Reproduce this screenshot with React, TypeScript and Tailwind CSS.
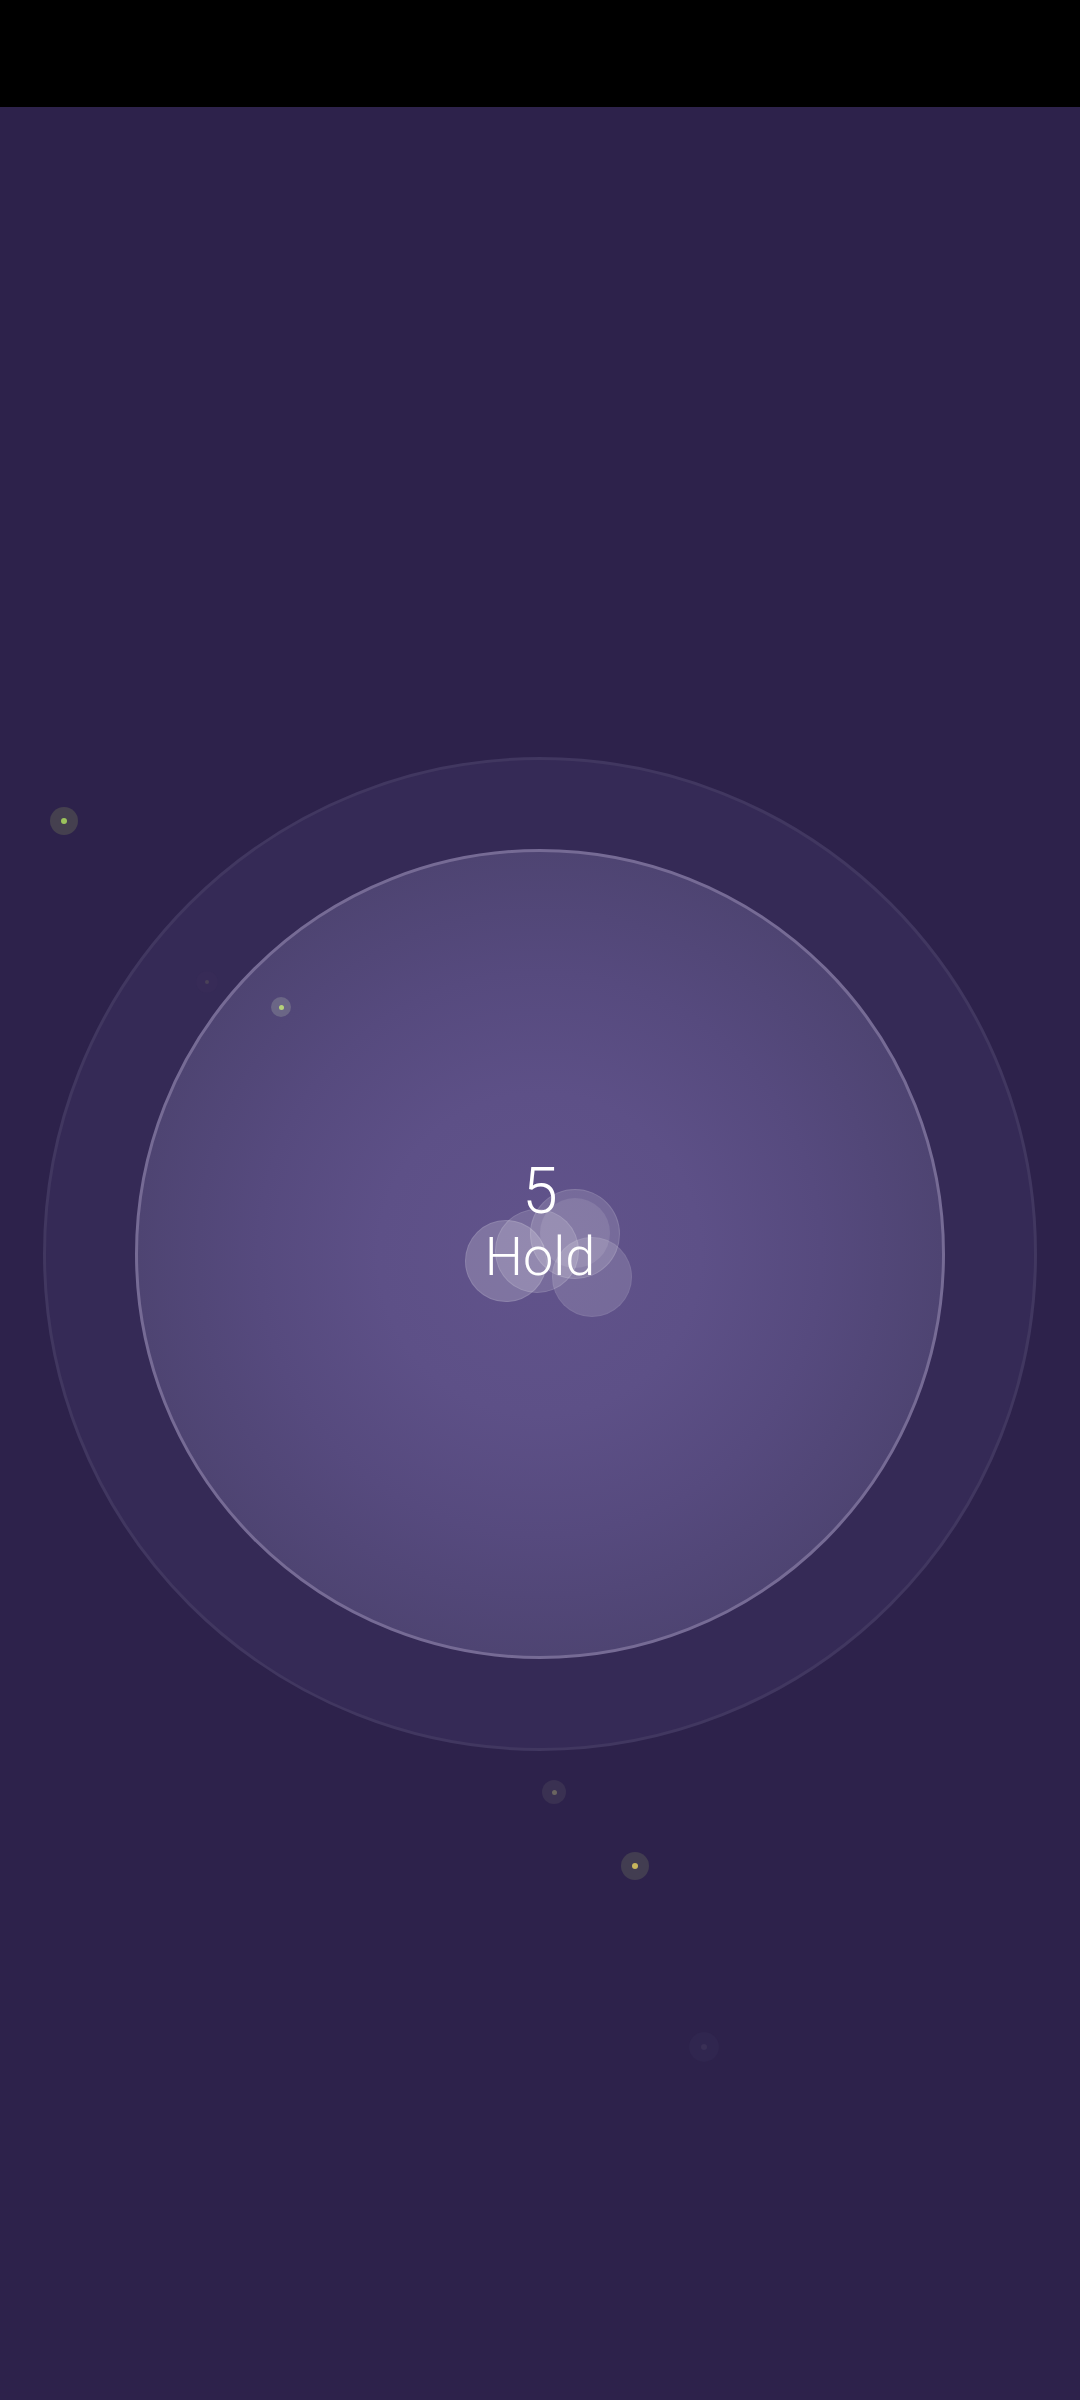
import React from "react";

type Particle = { x: number; y: number; r: number; halo: string; core: string; coreR: number };

const particles: Particle[] = [
  { x: 64, y: 821, r: 14, halo: "bg-[#45404f]", core: "bg-[#9cc35c]", coreR: 3 },
  { x: 281, y: 1007, r: 10, halo: "bg-[#6b6686]", core: "bg-[#b6d27a]", coreR: 2.5 },
  { x: 207, y: 982, r: 11, halo: "bg-[#372b57]", core: "bg-[#4a4158]", coreR: 2 },
  { x: 554, y: 1792, r: 12, halo: "bg-[#3a3152]", core: "bg-[#6a6560]", coreR: 2.5 },
  { x: 635, y: 1866, r: 14, halo: "bg-[#423d51]", core: "bg-[#c7b65c]", coreR: 3 },
  { x: 704, y: 2047, r: 15, halo: "bg-[#30264f]", core: "bg-[#3a3056]", coreR: 3 },
];

type Bubble = { x: number; y: number; r: number; cls: string };

const bubbles: Bubble[] = [
  { x: 506, y: 1261, r: 41, cls: "bg-white/20 border border-white/10" },
  { x: 537, y: 1251, r: 42, cls: "bg-white/15 border border-white/10" },
  { x: 575, y: 1234, r: 45, cls: "bg-white/15 border border-white/10" },
  { x: 575, y: 1233, r: 35, cls: "bg-white/10" },
  { x: 592, y: 1277, r: 40, cls: "bg-white/15 border border-white/5" },
];

export default function App() {
  return (
    <div
      className="relative w-[1080px] h-[2400px] bg-[#2d224b] flex flex-col overflow-hidden"
      style={{ fontFamily: "Roboto, 'Noto Sans', sans-serif" }}
    >
      <div className="h-[107px] shrink-0 bg-black" />
      <div className="flex-1 flex items-center justify-center">
        <div className="w-[994px] h-[994px] rounded-full bg-[#352a56] border-[3px] border-[#413760] flex items-center justify-center">
          <div className="w-[810px] h-[810px] rounded-full border-[3px] border-[#766b95] bg-[radial-gradient(circle_closest-side,#61538b_0%,#5d5087_40%,#564a7e_70%,#4e4472_100%)]" />
        </div>
      </div>

      {particles.map((p, i) => (
        <div
          key={i}
          className={`absolute rounded-full flex items-center justify-center ${p.halo}`}
          style={{ left: p.x - p.r, top: p.y - p.r, width: p.r * 2, height: p.r * 2 }}
        >
          <div
            className={`rounded-full ${p.core}`}
            style={{ width: p.coreR * 2, height: p.coreR * 2 }}
          />
        </div>
      ))}

      {bubbles.map((b, i) => (
        <div
          key={i}
          className={`absolute rounded-full ${b.cls}`}
          style={{ left: b.x - b.r, top: b.y - b.r, width: b.r * 2, height: b.r * 2 }}
        />
      ))}

      <div className="absolute left-0 right-0 top-[1160px] flex flex-col items-center text-white font-light">
        <div className="text-[64px] leading-none">5</div>
        <div className="text-[54px] leading-none mt-[6px]">Hold</div>
      </div>
    </div>
  );
}
